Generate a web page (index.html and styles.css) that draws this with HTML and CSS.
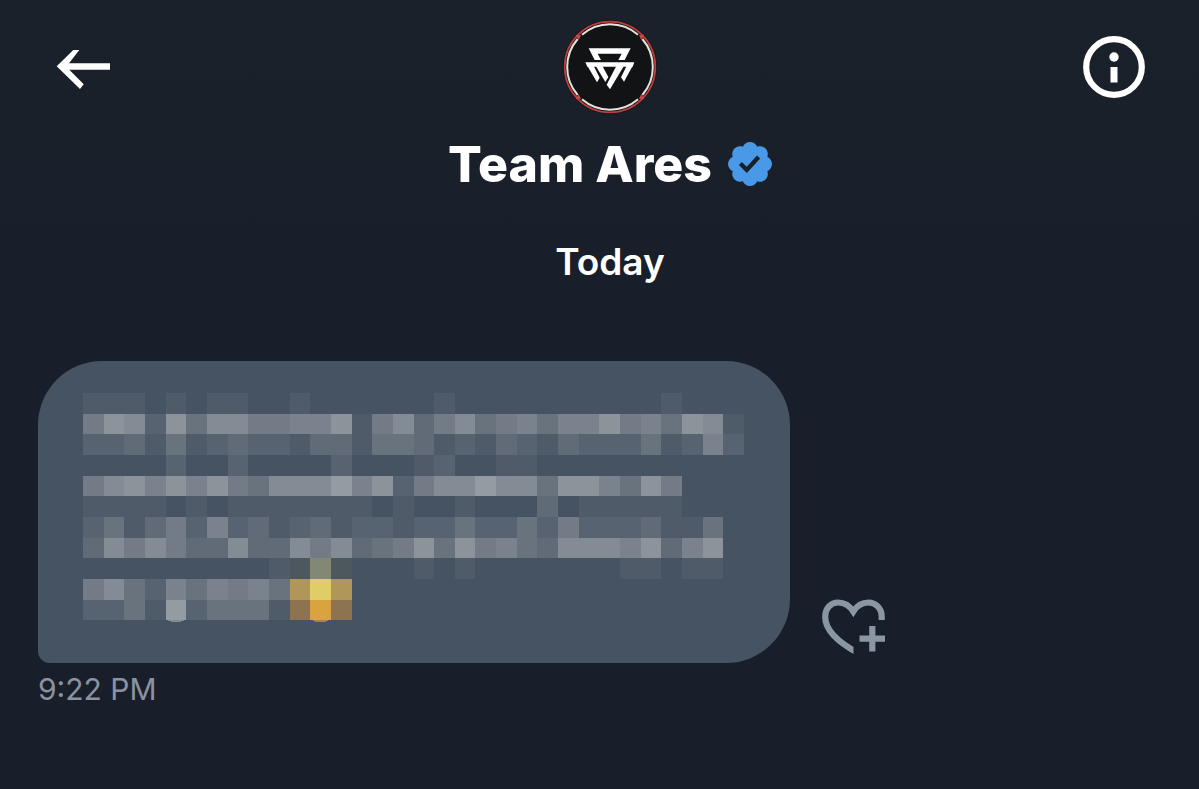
FILE: index.html
```html
<!DOCTYPE html>
<html lang="en">
<head>
    <meta charset="UTF-8">
    <meta name="viewport" content="width=device-width, initial-scale=1.0">
    <title>Team Ares</title>
    <link rel="stylesheet" href="styles.css">
</head>
<body>
    <div class="chat">
        <header class="top-bar">
            <button class="back-btn" aria-label="Back">
                <svg width="54" height="44" viewBox="0 -3 54 44">
                    <path d="M.7 18.3 17.3 2h6L13 15.3h41v6.4H13.3l14.4 14.6L24 41z" fill="#fff"/>
                </svg>
            </button>
            <svg class="avatar" width="94" height="94" viewBox="0 0 282 282" role="img" aria-label="Team Ares logo">
                <circle cx="141" cy="141" r="141" fill="#1b1315"/>
                <circle cx="141" cy="141" r="136" fill="#121314" stroke="#bd3f40" stroke-width="5"/>
                <g fill="none" stroke="#e4e1de" stroke-width="6">
                    <path d="M57 44a128 128 0 0 1 168 0"/>
                    <path d="M238 57a128 128 0 0 1 0 168"/>
                    <path d="M225 238a128 128 0 0 1-168 0"/>
                    <path d="M44 225a128 128 0 0 1 0-168"/>
                </g>
                <path d="M38 44l16 2-7 14zM244 44l-16 2 7 14zM38 238l16-2-7-14zM244 238l-16-2 7-14z" fill="#d04546"/>
                <g fill="#fff">
                    <path d="M77 85h126l-18 35h-19l10-19h-72l10 19H95z"/>
                    <path d="M67 127h147l-5 13H73z"/>
                    <path d="M72 136h19l19 37-8 14z"/>
                    <path d="M97 136h20l19 35-9 15z"/>
                    <path d="M161 136h23l-43 72-10-14z"/>
                    <path d="M192 136h18l-27 49-9-13z"/>
                </g>
            </svg>
            <button class="info-btn" aria-label="Conversation info">
                <svg width="62" height="62" viewBox="0 0 62 62">
                    <circle cx="31" cy="31" r="27.8" fill="none" stroke="#fff" stroke-width="6.2"/>
                    <circle cx="31" cy="21" r="4.7" fill="#fff"/>
                    <path d="M27.5 31h7v15.5h-7z" fill="#fff"/>
                </svg>
            </button>
        </header>

        <div class="name">
            <h1>Team Ares</h1>
            <svg width="44" height="44" viewBox="1.6 1.6 18.8 18.8" role="img" aria-label="Verified">
                <path fill="#4a99e9" d="M20.396 11c-.018-.646-.215-1.275-.57-1.816-.354-.54-.852-.972-1.438-1.246.223-.607.27-1.264.14-1.897-.131-.634-.437-1.218-.882-1.687-.47-.445-1.053-.75-1.687-.882-.633-.13-1.29-.083-1.897.14-.273-.587-.704-1.086-1.245-1.44S11.647 1.62 11 1.604c-.646.017-1.273.213-1.813.568s-.969.854-1.24 1.44c-.608-.223-1.267-.272-1.902-.14-.635.13-1.22.436-1.69.882-.445.47-.749 1.055-.878 1.688-.13.633-.08 1.29.144 1.896-.587.274-1.087.705-1.443 1.245-.356.54-.555 1.17-.574 1.817.02.647.218 1.276.574 1.817.356.54.856.972 1.443 1.245-.224.606-.274 1.263-.144 1.896.13.634.433 1.218.877 1.688.47.443 1.054.747 1.687.878.633.132 1.29.084 1.897-.136.274.586.705 1.084 1.246 1.439.54.354 1.17.551 1.816.569.647-.016 1.276-.213 1.817-.567s.972-.854 1.245-1.44c.604.239 1.266.296 1.903.164.636-.132 1.22-.447 1.68-.907.46-.46.776-1.044.908-1.681s.075-1.299-.165-1.903c.586-.274 1.084-.705 1.439-1.246.354-.54.551-1.17.569-1.816zM9.662 14.85l-3.429-3.428 1.293-1.302 2.072 2.072 4.4-4.794 1.347 1.246z"/>
            </svg>
        </div>

        <h2 class="day">Today</h2>

        <div class="message">
            <div class="bubble">
                <svg id="mosaic" width="661" height="229" viewBox="0 0 661 229" role="img" aria-label="Hidden message" shape-rendering="crispEdges"></svg>
            </div>
            <button class="react-btn" aria-label="Add reaction">
                <svg width="64" height="58" viewBox="0 0 64 58" fill="none" stroke="#8b96a3" stroke-width="6.2">
                    <clipPath id="heartCut"><path d="M0 0h64v22H31.500v36H0z"/></clipPath>
                    <path clip-path="url(#heartCut)" d="M59.700 24V18.500C59.700 10 53.500 4.500 46.500 4.500 40 4.500 35 7.500 31.300 13.500 27.500 7.500 22.500 4.500 16 4.500 9 4.500 3.200 10 3.200 19 3.200 31 13 42.500 36 55"/>
                    <path d="M50.300 28v25.500M37.500 40.700h25.500"/>
                </svg>
            </button>
        </div>
        <time class="time">9:22 PM</time>
    </div>

    <script>
        // 0-9 is how light a block is, letters are the coloured ones
        const rows = [
            '11101011001000000100000000001000',
            '58728477556681573574564668564871',
            '22314123221331443121321322241262',
            '00002002000020001200110000000000',
            '57868685477796825779774886485000',
            '11110101111111010010003011111000',
            '24135262312312212242242522231140',
            '37575337337573458485643777683680',
            '0000000001aea0001010000000110110',
            '5742646564bcb0000000000000000000',
            '2241924441dfd0000000000000000000'
        ];
        const colors = {
            a: '#4c575e',
            e: '#838875',
            b: '#b1965a',
            c: '#e1cd68',
            d: '#8d7350',
            f: '#d9a43f'
        };
        const mosaic = document.getElementById('mosaic');
        const size = 661 / 32;

        function shade(level) {
            return `rgb(${70 + level * 8.7}, ${83 + level * 8}, ${98 + level * 7.1})`;
        }

        let blocks = `<ellipse cx="${size * 4.5}" cy="227" rx="8" ry="2" fill="${shade(7)}"/>`;
        blocks += `<ellipse cx="${size * 11.5}" cy="227" rx="8" ry="2" fill="#a98544"/>`;
        rows.forEach((row, y) => {
            [...row].forEach((cell, x) => {
                if (cell !== '0') {
                    blocks += `<rect x="${x * size}" y="${y * size}" width="${size}" height="${size}" fill="${colors[cell] || shade(Number(cell))}"/>`;
                }
            });
        });
        mosaic.innerHTML = blocks;
    </script>
</body>
</html>
```

FILE: styles.css
```css
body {
    margin: 0;
    min-height: 100vh;
    background: linear-gradient(#19212a, #191f2a 300px);
    color: #fff;
    font-family: Inter, "Liberation Sans", sans-serif;
}

.chat {
    padding: 20px 17px 40px 38px;
}

button {
    background: none;
    border: none;
    padding: 0;
    cursor: pointer;
}

svg {
    display: block;
}

.top-bar {
    display: grid;
    grid-template-columns: 1fr auto 1fr;
    align-items: center;
}

.back-btn {
    justify-self: start;
    margin-left: 18px;
}

.info-btn {
    justify-self: end;
    margin-right: 37px;
}

.name {
    display: flex;
    justify-content: center;
    align-items: center;
    gap: 16px;
    margin-top: 20px;
}

h1 {
    margin: 0;
    font-size: 50px;
    line-height: 60px;
    font-weight: 800;
}

.day {
    margin: 46px 0 0;
    text-align: center;
    font-size: 37px;
    line-height: 44px;
    font-weight: 600;
}

.message {
    display: flex;
    align-items: flex-end;
    gap: 32px;
    margin-top: 77px;
}

.bubble {
    padding: 32px 46px 41px 45px;
    background: #465362;
    border-radius: 64px 64px 64px 12px;
}

.react-btn {
    margin-bottom: 7px;
}

.time {
    display: block;
    margin-top: 6px;
    font-size: 30px;
    line-height: 40px;
    color: #8b92a0;
}
```
